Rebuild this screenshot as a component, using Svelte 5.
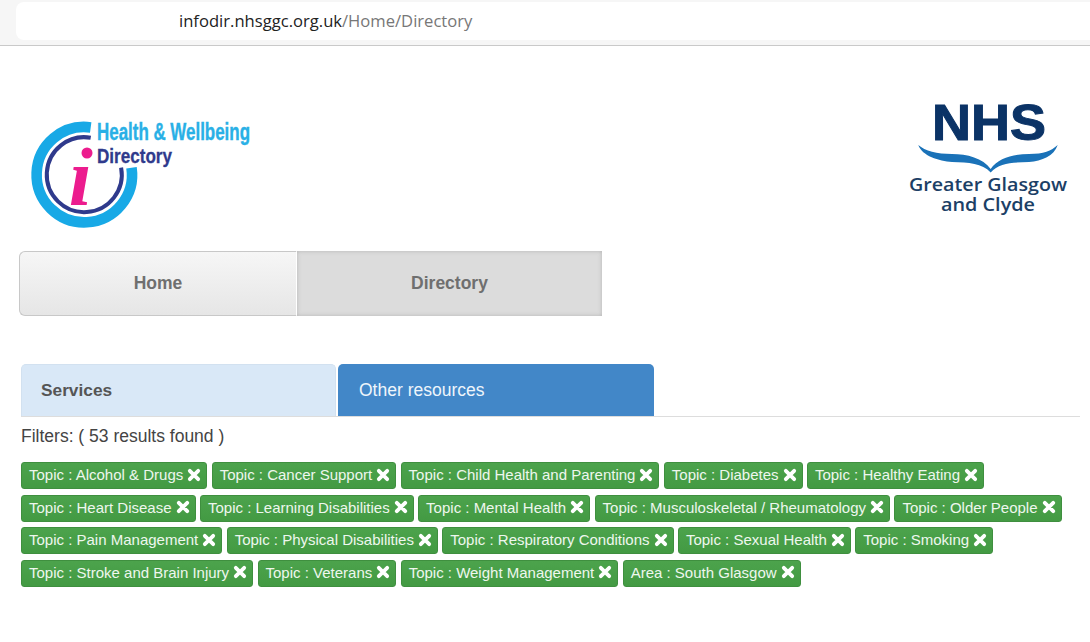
<script>
  const filters = [
    "Topic : Alcohol & Drugs",
    "Topic : Cancer Support",
    "Topic : Child Health and Parenting",
    "Topic : Diabetes",
    "Topic : Healthy Eating",
    "Topic : Heart Disease",
    "Topic : Learning Disabilities",
    "Topic : Mental Health",
    "Topic : Musculoskeletal / Rheumatology",
    "Topic : Older People",
    "Topic : Pain Management",
    "Topic : Physical Disabilities",
    "Topic : Respiratory Conditions",
    "Topic : Sexual Health",
    "Topic : Smoking",
    "Topic : Stroke and Brain Injury",
    "Topic : Veterans",
    "Topic : Weight Management",
    "Area : South Glasgow"
  ];
</script>

<div class="page">
  <header class="addressbar">
    <div class="url"><span class="host">infodir.nhsggc.org.uk</span>/Home/Directory</div>
  </header>

  <div class="brand">
    <svg class="logo" width="270" height="135" viewBox="0 0 270 135" aria-label="Health and Wellbeing Directory">
      <path class="ring-outer" d="M90.700 27.400 A47.700 47.700 0 1 0 131.500 67.700" />
      <path class="ring-inner" d="M90.700 37.750 A37.500 37.500 0 1 0 121.100 67.700" />
      <circle cx="87" cy="53" r="5.500" fill="#ec1c8e" />
      <text x="69" y="105" class="logo-i">ı</text>
      <text x="97" y="40" class="logo-health" textLength="153" lengthAdjust="spacingAndGlyphs">Health &amp; Wellbeing</text>
      <text x="97" y="63" class="logo-dir" textLength="75" lengthAdjust="spacingAndGlyphs">Directory</text>
    </svg>
    <svg class="nhs" width="170" height="125" viewBox="0 0 170 125" aria-label="NHS Greater Glasgow and Clyde">
      <text x="25" y="40" class="nhs-mark" textLength="114" lengthAdjust="spacingAndGlyphs">NHS</text>
      <path class="wave" d="M11.300 45 C18 51 30 54 45 54 C60 54 76 58 83.700 69 C91 58 107 54 122 54 C137 54 144 51 150.700 45 C147 56 135 61 122 62 C105 62.500 92 63 83.700 72.500 C75 63 62 62.500 45 62 C32 61 15 56 11.300 45 Z" />
      <text x="81" y="91" class="nhs-name" text-anchor="middle" textLength="158" lengthAdjust="spacingAndGlyphs">Greater Glasgow</text>
      <text x="81" y="111" class="nhs-name" text-anchor="middle" textLength="94" lengthAdjust="spacingAndGlyphs">and Clyde</text>
    </svg>
  </div>

  <nav class="mainnav">
    <a class="home" href="#home">Home</a>
    <a class="directory" href="#directory">Directory</a>
  </nav>

  <div class="tabs">
    <div class="tab services">Services</div>
    <div class="tab resources">Other resources</div>
  </div>

  <p class="count">Filters: ( 53 results found )</p>

  <div class="filters">
    {#each filters as filter}
      <span class="tag">
        {filter}
        <svg class="remove" width="14" height="14" viewBox="0 0 14 14" aria-hidden="true">
          <path d="M2.800 2.800 L11.200 11.200 M11.200 2.800 L2.800 11.200" />
        </svg>
      </span>
    {/each}
  </div>
</div>

<style>
  :global(body) {
    background: #fff;
    font-family: "Liberation Sans", Arial, sans-serif;
    overflow: hidden;
  }

  .page {
    width: 1090px;
    height: 642px;
    overflow: hidden;
  }

  .addressbar {
    height: 46px;
    padding: 2px 0 5px 16px;
    box-sizing: border-box;
    background: #f6f6f6;
    border-bottom: 1px solid #c9c9c9;
  }

  .url {
    height: 38px;
    padding-left: 163px;
    border-radius: 8px 0 0 8px;
    background: #fff;
    font-family: "Open Sans", sans-serif;
    font-size: 16.600px;
    line-height: 37px;
    color: #777;
  }

  .host {
    color: #222;
  }

  .brand {
    display: flex;
    justify-content: space-between;
    height: 205px;
    padding-top: 54px;
    padding-right: 13px;
    box-sizing: border-box;
  }

  .logo text,
  .nhs text {
    font-family: "Liberation Sans", sans-serif;
  }

  .ring-outer {
    fill: none;
    stroke: #18a9e6;
    stroke-width: 10.600;
  }

  .ring-inner {
    fill: none;
    stroke: #2f3a8c;
    stroke-width: 4;
  }

  .logo .logo-i {
    font-family: "Liberation Serif", serif;
    font-style: italic;
    font-weight: 700;
    font-size: 82px;
    fill: #ec1c8e;
  }

  .logo-health {
    font-weight: 700;
    font-size: 23.500px;
    fill: #29b0e6;
    stroke: #29b0e6;
    stroke-width: 0.400;
  }

  .logo-dir {
    font-weight: 700;
    font-size: 21px;
    fill: #2f3a8c;
    stroke: #2f3a8c;
    stroke-width: 0.300;
  }

  .nhs-mark {
    font-weight: 700;
    font-size: 50px;
    fill: #0b3366;
    stroke: #0b3366;
    stroke-width: 1;
  }

  .wave {
    fill: #1a72b8;
  }

  .nhs .nhs-name {
    font-family: "Open Sans", sans-serif;
    font-weight: 600;
    font-size: 17.500px;
    fill: #1c3f66;
  }

  .mainnav {
    display: flex;
    width: 583px;
    height: 65px;
    margin-left: 19px;
  }

  .mainnav a {
    display: flex;
    align-items: center;
    justify-content: center;
    box-sizing: border-box;
    color: #6f6f6f;
    font-size: 17.500px;
    font-weight: 700;
    text-decoration: none;
  }

  .home {
    width: 278px;
    border: 1px solid #c8c8c8;
    border-right: 1px solid #fff;
    border-radius: 6px 0 0 6px;
    background: linear-gradient(#f6f6f6, #e6e6e6);
  }

  .directory {
    flex: 1;
    background: #dcdcdc;
    box-shadow: inset 0 0 4px #b5b5b5;
  }

  .tabs {
    display: flex;
    gap: 2px;
    height: 53px;
    margin: 48px 10px 0 21px;
    border-bottom: 1px solid #ddd;
    box-sizing: border-box;
  }

  .tab {
    box-sizing: border-box;
    width: 315px;
    padding: 0 19px;
    border-radius: 5px 5px 0 0;
    font-size: 17.300px;
    line-height: 51px;
  }

  .services {
    background: #d9e8f7;
    border: 1px solid #d2e1f0;
    border-bottom: 0;
    color: #555;
    font-weight: 700;
  }

  .resources {
    width: 316px;
    padding: 0 21px;
    background: #4287c8;
    color: #eef5fb;
    font-size: 17.500px;
    line-height: 52px;
  }

  .count {
    margin: 9px 0 0 21px;
    font-size: 17.500px;
    line-height: 20px;
    color: #444;
  }

  .filters {
    display: flex;
    flex-wrap: wrap;
    gap: 5.500px 4.400px;
    margin: 16px 10px 0 21px;
  }

  .tag {
    display: inline-flex;
    align-items: center;
    gap: 4px;
    box-sizing: border-box;
    height: 27px;
    padding: 0 5px 2px 7px;
    border: 1px solid #3f8f3f;
    border-radius: 3px;
    background: linear-gradient(#4ca34c, #439a43);
    color: #eef7ee;
    font-size: 15px;
    white-space: nowrap;
  }

  .remove path {
    fill: none;
    stroke: #fff;
    stroke-width: 3.800;
    stroke-linecap: round;
  }
</style>
